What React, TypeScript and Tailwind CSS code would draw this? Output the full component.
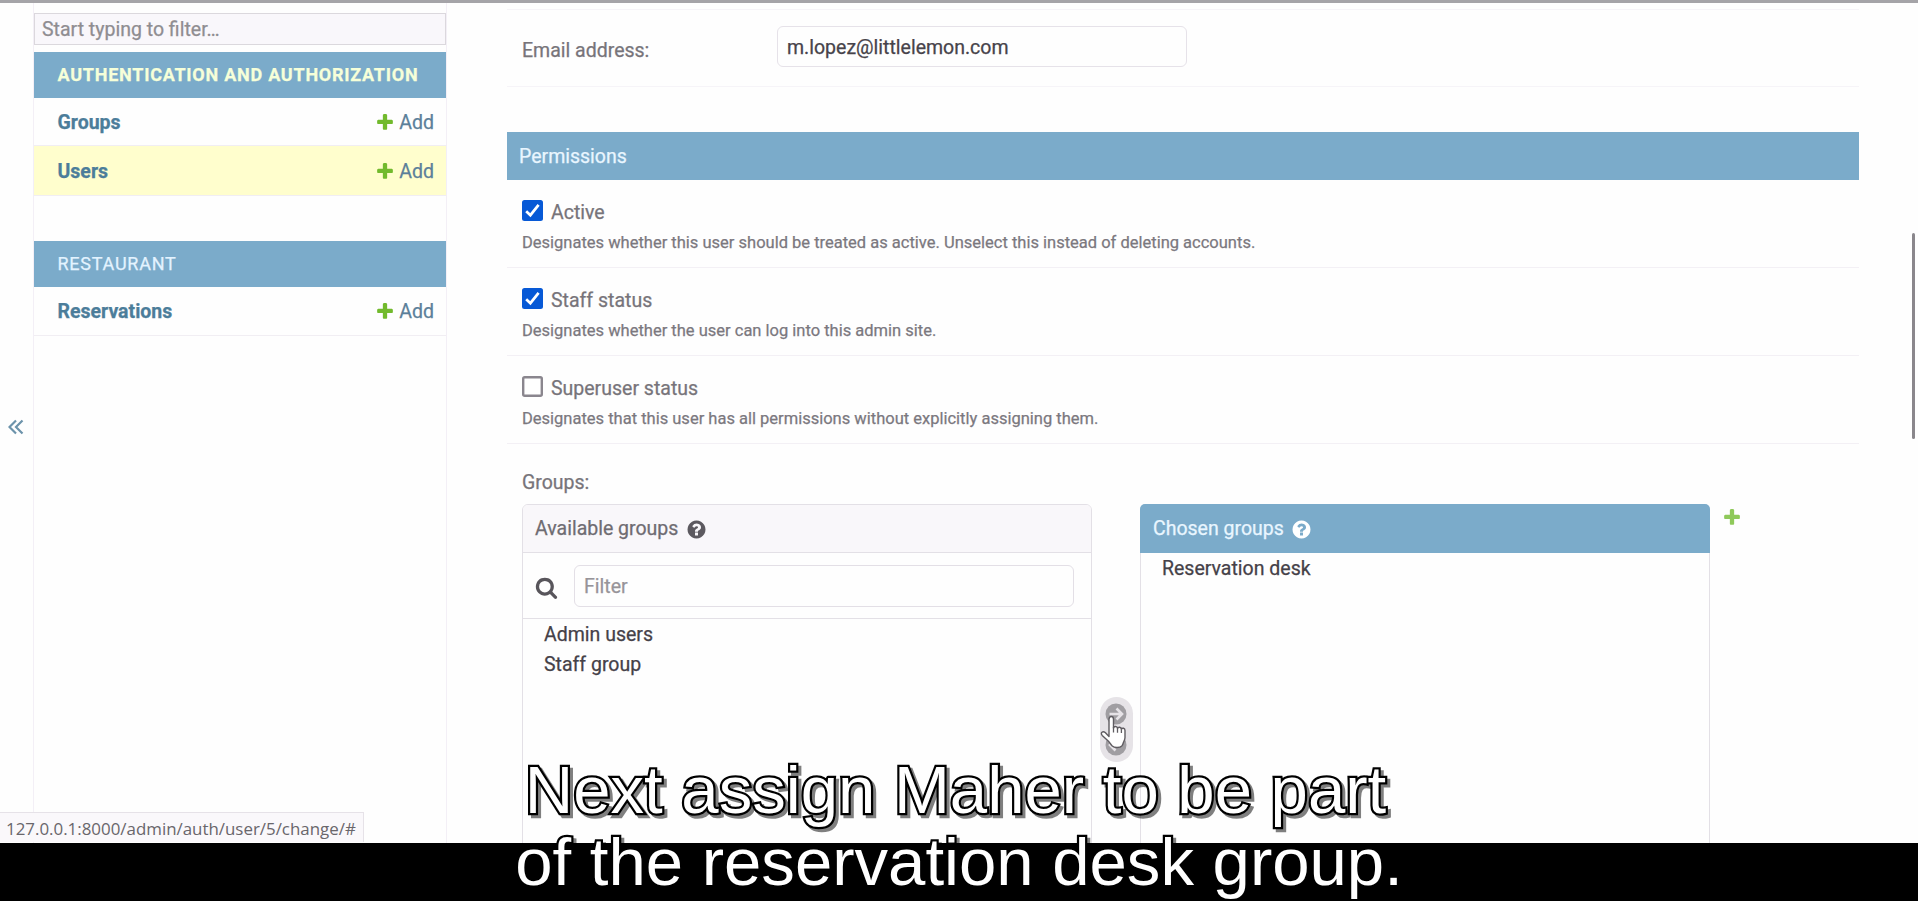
import React from "react";

const PLUS =
  "M1600 796v192q0 40-28 68t-68 28h-416v416q0 40-28 68t-68 28h-192q-40 0-68-28t-28-68v-416h-416q-40 0-68-28t-28-68v-192q0-40 28-68t68-28h416v-416q0-40 28-68t68-28h192q40 0 68 28t28 68v416h416q40 0 68 28t28 68z";
const QUESTION =
  "M1024 1376v-192q0-14-9-23t-23-9h-192q-14 0-23 9t-9 23v192q0 14 9 23t23 9h192q14 0 23-9t9-23zm256-672q0-88-55.5-163t-138.5-116-170-41q-243 0-371 213-15 24 8 42l132 100q7 6 19 6 16 0 25-12 53-68 86-92 34-24 86-24 48 0 85.5 26t37.5 59q0 38-20 61t-68 45q-63 28-115.5 86.5t-52.5 125.5v36q0 14 9 23t23 9h192q14 0 23-9t9-23q0-19 21.5-49.5t54.5-49.5q32-18 49-28.5t46-35 44.5-48 28-60.5 12.5-81zm384 192q0 209-103 385.5t-279.5 279.5-385.5 103-385.5-103-279.5-279.5-103-385.5 103-385.5 279.5-279.5 385.5-103 385.5 103 279.5 279.5 103 385.5z";
const SEARCH =
  "M1216 832q0-185-131.5-316.5t-316.5-131.5-316.5 131.5-131.5 316.5 131.5 316.5 316.5 131.5 316.5-131.5 131.5-316.5zm512 832q0 52-38 90t-90 38q-54 0-90-38l-343-342q-179 124-399 124-143 0-273.5-55.5t-225-150-150-225-55.5-273.5 55.5-273.5 150-225 225-150 273.5-55.5 273.5 55.5 225 150 150 225 55.5 273.5q0 220-124 399l343 343q37 37 37 90z";

function Icon({ d, className }: { d: string; className: string }) {
  return (
    <svg viewBox="0 0 1792 1792" className={`shrink-0 ${className}`} fill="currentColor">
      <path d={d} />
    </svg>
  );
}

function ModelRow({ name, className }: { name: string; className: string }) {
  return (
    <div className={`flex items-center border-b border-[#f1eef3] pl-[23.5px] pr-3 ${className}`}>
      <a className="flex-1 pt-[2px] font-bold text-[#4c7d9a]">{name}</a>
      <Icon d={PLUS} className="mr-1 size-5 text-[#72ba2d]" />
      <a className="pt-[2px] text-[#5b809a]">Add</a>
    </div>
  );
}

function Sidebar() {
  return (
    <nav className="ml-[33px] w-[414px] border-x border-[#f3eff6] pt-[10px]">
      <div className="flex h-8 items-center border border-[#dbd8dd] bg-[#f9f7fb] pl-[7px] pt-[2px] text-[#8f8d91]">
        Start typing to filter…
      </div>
      <div className="mt-[7px] flex h-[46px] items-center bg-[#7babca] pl-[23.5px] text-[18px] font-bold tracking-[0.75px] text-[#f6ffd9]">
        AUTHENTICATION AND AUTHORIZATION
      </div>
      <ModelRow name="Groups" className="h-12" />
      <ModelRow name="Users" className="h-[50px] bg-[#fffecd]" />
      <div className="mt-[45px] flex h-[46px] items-center bg-[#7babca] pl-[23.5px] text-[18px] tracking-[0.75px] text-[#e3f3ff]">
        RESTAURANT
      </div>
      <ModelRow name="Reservations" className="h-[49px]" />
    </nav>
  );
}

function CheckRow({ label, help, checked }: { label: string; help: string; checked: boolean }) {
  return (
    <div className="h-[88px] border-b border-[#f3f0f5] pl-[15px] pt-5">
      <div className="flex h-6 items-center">
        <svg viewBox="0 0 21 21" className="-mt-[3px] mr-2 size-[21px]">
          {checked ? (
            <>
              <rect width="21" height="21" rx="2.5" fill="#0759d6" />
              <path d="M4.2 11.2l4.2 4 8.2-10.4" fill="none" stroke="#fff" strokeWidth="2.7" />
            </>
          ) : (
            <rect x="1.2" y="1.2" width="18.6" height="18.6" rx="1.5" fill="#fff" stroke="#8a868e" strokeWidth="2.4" />
          )}
        </svg>
        <span className="pt-px">{label}</span>
      </div>
      <div className="mt-[7px] text-[16.5px] leading-6 text-[#7b787e]">{help}</div>
    </div>
  );
}

function GroupSelector() {
  return (
    <div className="flex items-start pl-[15px]">
      <div className="h-[400px] w-[570px] shrink-0 rounded-t-[6px] border border-[#e3e0e6]">
        <div className="flex h-12 items-center rounded-t-[5px] border-b border-[#e3e0e6] bg-[#f9f7fa] pl-3 pt-px text-[#6f6c72]">
          Available groups
          <Icon d={QUESTION} className="ml-2 size-[21px] text-[#5c595f]" />
        </div>
        <div className="flex h-[66px] items-center border-b border-[#e3e0e6] pl-3 pr-[17px]">
          <Icon d={SEARCH} className="mt-1 size-[23px] text-[#58555b]" />
          <div className="ml-4 flex h-[42px] flex-1 items-center rounded-[6px] border border-[#e3dfe6] pl-[9px] pt-[2px] text-[#979499]">
            Filter
          </div>
        </div>
        <div className="pl-[21px] pt-px leading-[30px] text-[#454148]">
          <div>Admin users</div>
          <div>Staff group</div>
        </div>
      </div>

      <div className="relative mt-[193px] flex h-[65px] w-[48px] shrink-0 justify-center">
        <div className="flex w-[33px] flex-col items-center justify-between rounded-full bg-[#e6e3e7] py-[6px]">
          <svg viewBox="0 0 22 22" className="size-[22px]">
            <circle cx="11" cy="11" r="10.5" fill="#a09ea2" />
            <path d="M4.5 11h12M11.5 5.5L17 11l-5.5 5.5" fill="none" stroke="#e6e3e7" strokeWidth="2.6" />
          </svg>
          <svg viewBox="0 0 22 22" className="size-[22px]">
            <circle cx="11" cy="11" r="10.5" fill="#a09ea2" />
            <path d="M17.5 11h-12M10.5 5.5L5 11l5.5 5.5" fill="none" stroke="#e6e3e7" strokeWidth="2.6" />
          </svg>
        </div>
        <svg viewBox="0 0 27 34" className="absolute left-[8px] top-[18px] h-[34px] w-[27px]">
          <path
            d="M9 21.5V4.3C9 .6 13.5.6 13.5 4.3V13c.4-2.1 3.8-2 4 .4.7-1.8 3.7-1.5 3.9.7.8-1.5 3.6-1.1 3.6 1.3v7c0 2-1 3.6-1.7 5.4-.4 1.2-.6 2-1.5 3.2-1.8 2-7.6 2-9.5.1-1.3-1.4-2.2-3.1-3.8-4.8L2.2 20.4c-2.3-2.7.7-4.8 3-2.9z"
            fill="#fff"
            stroke="#5f5c61"
            strokeWidth="1.4"
            strokeLinejoin="round"
          />
          <path d="M13.5 12v5.5M17.5 13.4v4.3M21.4 14.3V18" stroke="#5f5c61" strokeWidth="1.3" />
        </svg>
      </div>

      <div className="h-[400px] w-[570px] shrink-0 rounded-t-[6px] border border-[#e3e0e6]">
        <div className="-mx-px -mt-px flex h-[49px] items-center rounded-t-[5px] bg-[#7babca] pl-[13px] pt-px text-[#e9f6ff]">
          Chosen groups
          <Icon d={QUESTION} className="ml-[7px] size-[21px] text-white" />
        </div>
        <div className="pl-[21px] leading-[31px] text-[#454148]">Reservation desk</div>
      </div>
      <Icon d={PLUS} className="ml-3 mt-[3px] size-[20px] text-[#8fc95a]" />
    </div>
  );
}

function ChangeForm() {
  return (
    <main className="ml-[60px] w-[1352px] pt-[6px] text-[#77747a]">
      <div className="flex h-[78px] items-start border-y border-[#f6f4f8] pl-[15px] pt-[16px]">
        <span className="mt-[10px] w-[255px] leading-[30px]">Email address:</span>
        <div className="flex h-[41px] w-[410px] items-center rounded-[6px] border border-[#e6e2e9] pl-[9px] pt-[2px] text-[#47434a]">
          m.lopez@littlelemon.com
        </div>
      </div>
      <h2 className="mt-[45px] flex h-12 items-center bg-[#7babca] pl-3 pt-[2px] text-[#e9f6ff]">Permissions</h2>
      <CheckRow
        label="Active"
        help="Designates whether this user should be treated as active. Unselect this instead of deleting accounts."
        checked
      />
      <CheckRow label="Staff status" help="Designates whether the user can log into this admin site." checked />
      <CheckRow
        label="Superuser status"
        help="Designates that this user has all permissions without explicitly assigning them."
        checked={false}
      />
      <div className="h-[60px] pl-[15px] pt-6 leading-[30px]">Groups:</div>
      <GroupSelector />
    </main>
  );
}

export default function App() {
  return (
    <div className="relative flex h-[901px] w-full flex-col overflow-hidden bg-[#fefefe] font-['Roboto',sans-serif] text-[19.5px] leading-none whitespace-nowrap">
      <div className="h-[3px] shrink-0 bg-[#a5a4a8]" />
      <div className="flex h-[840px] shrink-0 overflow-hidden [-webkit-text-stroke:0.25px_currentColor]">
        <Sidebar />
        <ChangeForm />
      </div>
      <div className="h-[58px] shrink-0 bg-black" />

      <svg viewBox="0 0 16 16" className="absolute left-[8px] top-[419px] size-4">
        <path d="M8 1.5L1.5 8 8 14.5M14.5 1.5L8 8l6.5 6.5" fill="none" stroke="#6c93ab" strokeWidth="2.2" />
      </svg>
      <div className="absolute left-[1912px] top-[233px] h-[206px] w-[3px] rounded-full bg-[#8a878c]" />
      <div className="absolute left-0 top-[812px] flex h-[30px] w-[364px] items-center border-r border-t border-[#e6e2e8] bg-[#faf8fb] pl-[6px] pt-[3px] font-['Open_Sans',sans-serif] text-[16.9px] text-[#69666b]">
        127.0.0.1:8000/admin/auth/user/5/change/#
      </div>

      <div className="absolute inset-x-0 top-[754px] flex flex-col items-center font-['Liberation_Sans',sans-serif] text-[67.1px] leading-[71.5px] text-white [-webkit-text-stroke:4.5px_#000] [paint-order:stroke_fill] [filter:drop-shadow(3px_3px_0_rgba(0,0,0,0.5))]">
        <span className="pr-[7px]">Next assign Maher to be part</span>
        <span>of the reservation desk group.</span>
      </div>
    </div>
  );
}
